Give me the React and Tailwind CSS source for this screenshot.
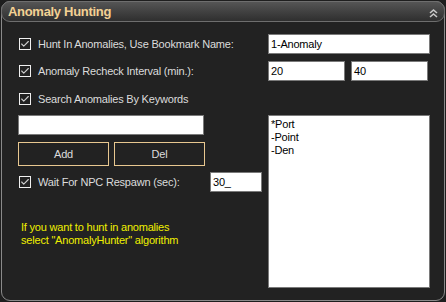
import { Check } from "lucide-react";

function CheckBox({ label }) {
  return (
    <label className="flex items-center gap-[7px] pl-[1px]">
      <span className="flex h-[12px] w-[12px] items-center justify-center border border-[#f0f0f0] bg-[#222]">
        <Check className="h-[10px] w-[10px] text-[#cfcfcf]" strokeWidth={2.6} />
      </span>
      <span className="text-[#dcdcdc]">{label}</span>
    </label>
  );
}

function TextBox({ value, className }) {
  return (
    <div
      className={`flex items-center border border-[#7a7a7a] bg-white px-[2px] text-black ${className}`}
    >
      {value}
    </div>
  );
}

function FlatButton({ children }) {
  return (
    <button className="h-[24px] w-[91px] border border-[#e8c890] bg-[#222] text-[#dcdcdc]">
      {children}
    </button>
  );
}

export default function App() {
  return (
    <div
      className="h-[302px] w-[446px] bg-[#1e1e1e] p-px text-[11px] leading-[13px] tracking-[-0.2px]"
      style={{ fontFamily: '"Liberation Sans", Arial, sans-serif' }}
    >
      <div className="flex h-full flex-col rounded-[9px] border border-[#8a8a8a] bg-[#222]">
        {/* header */}
        <div className="-mx-px -mt-px flex h-[21px] items-center justify-between rounded-[9px] border border-[#6e6e6e] bg-gradient-to-b from-[#555] to-[#2f2f2f] pl-[6px] pr-[6px]">
          <span className="text-[13px] font-bold tracking-[-0.3px] text-[#f3d193]">
            Anomaly Hunting
          </span>
          <svg width="9" height="10" viewBox="0 0 9 10" className="mt-[2px]">
            <polyline points="1,5 4.5,2 8,5" fill="none" stroke="#c8c8c8" strokeWidth="1.6" />
            <polyline points="1,9 4.5,6 8,9" fill="none" stroke="#c8c8c8" strokeWidth="1.6" />
          </svg>
        </div>

        <div className="flex flex-col pl-[16px] pt-[12px]">
          <div className="flex h-[20px] items-center">
            <div className="w-[250px]">
              <CheckBox label="Hunt In Anomalies, Use Bookmark Name:" />
            </div>
            <TextBox value="1-Anomaly" className="h-[20px] w-[162px]" />
          </div>

          <div className="mt-[7px] flex h-[20px] items-center">
            <div className="w-[250px]">
              <CheckBox label="Anomaly Recheck Interval (min.):" />
            </div>
            <div className="flex gap-[6px]">
              <TextBox value="20" className="h-[20px] w-[77px]" />
              <TextBox value="40" className="h-[20px] w-[77px]" />
            </div>
          </div>

          <div className="mt-[8px] flex h-[20px] items-center">
            <CheckBox label="Search Anomalies By Keywords" />
          </div>

          <div className="mt-[6px] flex">
            <div className="flex w-[250px] flex-col">
              <TextBox value="" className="h-[20px] w-[186px]" />
              <div className="mt-[7px] flex gap-[5px]">
                <FlatButton>Add</FlatButton>
                <FlatButton>Del</FlatButton>
              </div>
              <div className="mt-[6px] flex h-[20px] items-center">
                <div className="w-[192px]">
                  <CheckBox label="Wait For NPC Respawn (sec):" />
                </div>
                <TextBox value="30_" className="h-[20px] w-[52px]" />
              </div>
              <p className="mt-[29px] pl-[3px] text-[#f0f000]">
                If you want to hunt in anomalies
                <br />
                select "AnomalyHunter" algorithm
              </p>
            </div>
            <div className="h-[173px] w-[162px] border border-[#7a7a7a] bg-white px-[2px] pt-[2px] text-black">
              <div>*Port</div>
              <div>-Point</div>
              <div>-Den</div>
            </div>
          </div>
        </div>
      </div>
    </div>
  );
}
